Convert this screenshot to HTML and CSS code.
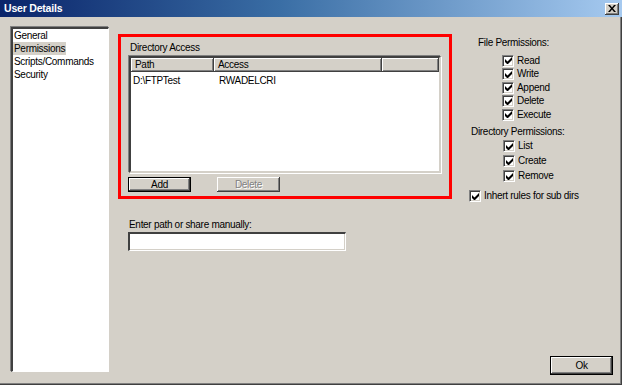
FILE: index.html
```html
<!DOCTYPE html>
<html>
<head>
<meta charset="utf-8">
<title>User Details</title>
<link rel="stylesheet" href="styles.css">
</head>
<body>
<div class="window">
  <div class="titlebar">
    <span class="title">User Details</span>
    <span class="close"><svg width="8" height="7" viewBox="0 0 8 7"><path d="M0 0h2l2 2.5L6 0h2L5 3.5 8 7H6L4 4.5 2 7H0l3-3.5z" fill="#000"/></svg></span>
  </div>
  <div class="content">
    <div class="nav">
      <div class="nav-item">General</div>
      <div class="nav-item selected">Permissions</div>
      <div class="nav-item">Scripts/Commands</div>
      <div class="nav-item">Security</div>
    </div>
    <div class="main">
      <div class="dir-box">
        <div class="label">Directory Access</div>
        <div class="listview">
          <div class="lv-header">
            <div class="hcell c-path">Path</div>
            <div class="hcell c-access">Access</div>
            <div class="hcell c-rest"></div>
          </div>
          <div class="lv-row">
            <span class="c-path cell">D:\FTPTest</span>
            <span class="c-access cell">RWADELCRI</span>
          </div>
        </div>
        <div class="btn-row">
          <button class="btn default add">Add</button>
          <button class="btn disabled del">Delete</button>
        </div>
      </div>
      <div class="manual">
        <div class="label">Enter path or share manually:</div>
        <div class="textbox"></div>
      </div>
    </div>
    <div class="side">
      <div class="group-title file-title">File Permissions:</div>
      <div class="checks file-checks">
        <label class="check"><span class="box"><svg width="7" height="7" viewBox="0 0 7 7"><path d="M0 2v3l2 2h1l4-4V0L2.5 4.5z" fill="#000"/></svg></span>Read</label>
        <label class="check"><span class="box"><svg width="7" height="7" viewBox="0 0 7 7"><path d="M0 2v3l2 2h1l4-4V0L2.5 4.5z" fill="#000"/></svg></span>Write</label>
        <label class="check"><span class="box"><svg width="7" height="7" viewBox="0 0 7 7"><path d="M0 2v3l2 2h1l4-4V0L2.5 4.5z" fill="#000"/></svg></span>Append</label>
        <label class="check"><span class="box"><svg width="7" height="7" viewBox="0 0 7 7"><path d="M0 2v3l2 2h1l4-4V0L2.5 4.5z" fill="#000"/></svg></span>Delete</label>
        <label class="check"><span class="box"><svg width="7" height="7" viewBox="0 0 7 7"><path d="M0 2v3l2 2h1l4-4V0L2.5 4.5z" fill="#000"/></svg></span>Execute</label>
      </div>
      <div class="group-title dir-title">Directory Permissions:</div>
      <div class="checks dir-checks">
        <label class="check"><span class="box"><svg width="7" height="7" viewBox="0 0 7 7"><path d="M0 2v3l2 2h1l4-4V0L2.5 4.5z" fill="#000"/></svg></span>List</label>
        <label class="check"><span class="box"><svg width="7" height="7" viewBox="0 0 7 7"><path d="M0 2v3l2 2h1l4-4V0L2.5 4.5z" fill="#000"/></svg></span>Create</label>
        <label class="check"><span class="box"><svg width="7" height="7" viewBox="0 0 7 7"><path d="M0 2v3l2 2h1l4-4V0L2.5 4.5z" fill="#000"/></svg></span>Remove</label>
      </div>
      <label class="check inherit"><span class="box"><svg width="7" height="7" viewBox="0 0 7 7"><path d="M0 2v3l2 2h1l4-4V0L2.5 4.5z" fill="#000"/></svg></span>Inhert rules for sub dirs</label>
      <button class="btn default ok">Ok</button>
    </div>
  </div>
</div>
</body>
</html>
```

FILE: styles.css
```css
* { box-sizing: border-box; }
html, body { margin: 0; padding: 0; }
body {
  width: 622px;
  height: 385px;
  overflow: hidden;
  background: #d4d0c8;
  font-family: "Liberation Sans", Arial, sans-serif;
  font-size: 10px;
  letter-spacing: -0.3px;
  color: #000;
}
.window {
  width: 622px;
  height: 385px;
  display: flex;
  flex-direction: column;
  background: #d4d0c8;
  box-shadow: inset -1px -1px 0 #404040, inset -2px -2px 0 #808080;
}
.titlebar {
  height: 17px;
  flex: none;
  display: flex;
  align-items: center;
  padding: 0 3px 0 4px;
  background: linear-gradient(to right, #0a246a 0%, #3a6ea5 45%, #a6caf0 100%);
}
.title {
  flex: 1;
  color: #fff;
  font-weight: bold;
  font-size: 10.5px;
  letter-spacing: -0.2px;
  line-height: 17px;
}
.close {
  width: 14px;
  height: 12px;
  margin-top: 1px;
  background: #d4d0c8;
  box-shadow: inset -1px -1px 0 #404040, inset 1px 1px 0 #fff, inset -2px -2px 0 #808080;
  display: flex;
  align-items: center;
  justify-content: center;
}
.close svg { display: block; margin-top: -1px; }
.content {
  flex: 1;
  display: flex;
  padding: 10px 0 0 11px;
}
.nav {
  width: 98px;
  height: 345px;
  flex: none;
  background: #fff;
  border-style: solid;
  border-width: 2px 1px 1px 2px;
  border-color: #404040 #fff #fff #404040;
  box-shadow: -1px -1px 0 #808080, 1px 1px 0 #d4d0c8;
  padding: 0;
}
.nav-item {
  line-height: 13px;
  height: 13px;
  padding-left: 1px;
  width: fit-content;
  padding-right: 1px;
}
.nav-item.selected { background: #d4d0c8; }
.main {
  width: 334px;
  flex: none;
  margin-left: 9px;
  padding-top: 7px;
  display: flex;
  flex-direction: column;
}
.dir-box {
  border: 3px solid #ff0000;
  height: 165px;
  padding: 4px 8px 0 8px;
}
.label {
  line-height: 13px;
  height: 13px;
  padding-left: 1px;
}
.dir-box .label { margin-bottom: 2px; }
.listview {
  width: 312px;
  height: 117px;
  background: #fff;
  border-style: solid;
  border-width: 2px;
  border-color: #404040 #d4d0c8 #d4d0c8 #404040;
  box-shadow: -1px -1px 0 #808080, 1px 1px 0 #fff;
}
.lv-header {
  display: flex;
  height: 14px;
  background: #d4d0c8;
}
.hcell {
  height: 14px;
  line-height: 13px;
  padding-left: 4px;
  box-shadow: inset -1px -1px 0 #404040, inset 1px 1px 0 #fff, inset -2px -2px 0 #808080;
}
.c-path { width: 83px; flex: none; }
.c-access { width: 168px; flex: none; }
.c-rest { flex: 1; }
.lv-row {
  display: flex;
  line-height: 13px;
  padding-top: 2px;
}
.cell { padding-left: 2px; }
.lv-row .c-access { padding-left: 5px; }
.btn-row {
  display: flex;
  margin-top: 4px;
  margin-left: -1px;
}
.btn {
  font-family: inherit;
  font-size: 10px;
  letter-spacing: -0.3px;
  color: #000;
  background: #d4d0c8;
  border: none;
  margin: 0;
  padding: 0;
  height: 15px;
  width: 63px;
  line-height: 13px;
  box-shadow: inset -1px -1px 0 #404040, inset 1px 1px 0 #fff, inset -2px -2px 0 #808080;
}
.btn.default {
  box-shadow: inset 0 0 0 1px #000, inset -2px -2px 0 #404040, inset 2px 2px 0 #fff, inset -3px -3px 0 #808080;
}
.btn.disabled {
  color: #808080;
  text-shadow: 1px 1px 0 #fff;
  margin-left: 26px;
}
.manual {
  margin-top: 19px;
  padding-left: 10px;
}
.manual .label { margin-bottom: 1px; }
.textbox {
  width: 218px;
  height: 19px;
  background: #fff;
  border-style: solid;
  border-width: 2px 1px 1px 2px;
  border-color: #404040 #fff #fff #404040;
  box-shadow: inset -1px -1px 0 #d4d0c8;
}
.side {
  flex: 1;
  display: flex;
  flex-direction: column;
  padding: 10px 9px 0 17px;
}
.group-title {
  line-height: 12px;
  height: 12px;
}
.file-title { margin-left: 9px; }
.dir-title { margin-left: 2px; margin-top: 4px; }
.checks { padding-left: 33px; }
.file-checks { margin-top: 5px; }
.file-checks .check { height: 13.5px; }
.dir-checks { margin-top: 1px; padding-left: 34px; }
.dir-checks .check { height: 15px; }
.check {
  display: flex;
  align-items: center;
  line-height: 12px;
}
.box {
  width: 12px;
  height: 12px;
  flex: none;
  margin-right: 3px;
  background: #fff;
  border-style: solid;
  border-width: 1px;
  border-color: #808080 #fff #fff #808080;
  box-shadow: inset 1px 1px 0 #404040, inset -1px -1px 0 #d4d0c8;
  display: flex;
  align-items: center;
  justify-content: center;
}
.box svg { display: block; }
.inherit { margin-top: 5px; height: 15px; }
.ok {
  margin-top: auto;
  margin-bottom: 10px;
  align-self: flex-end;
  width: 63px;
  height: 19px;
}
```
